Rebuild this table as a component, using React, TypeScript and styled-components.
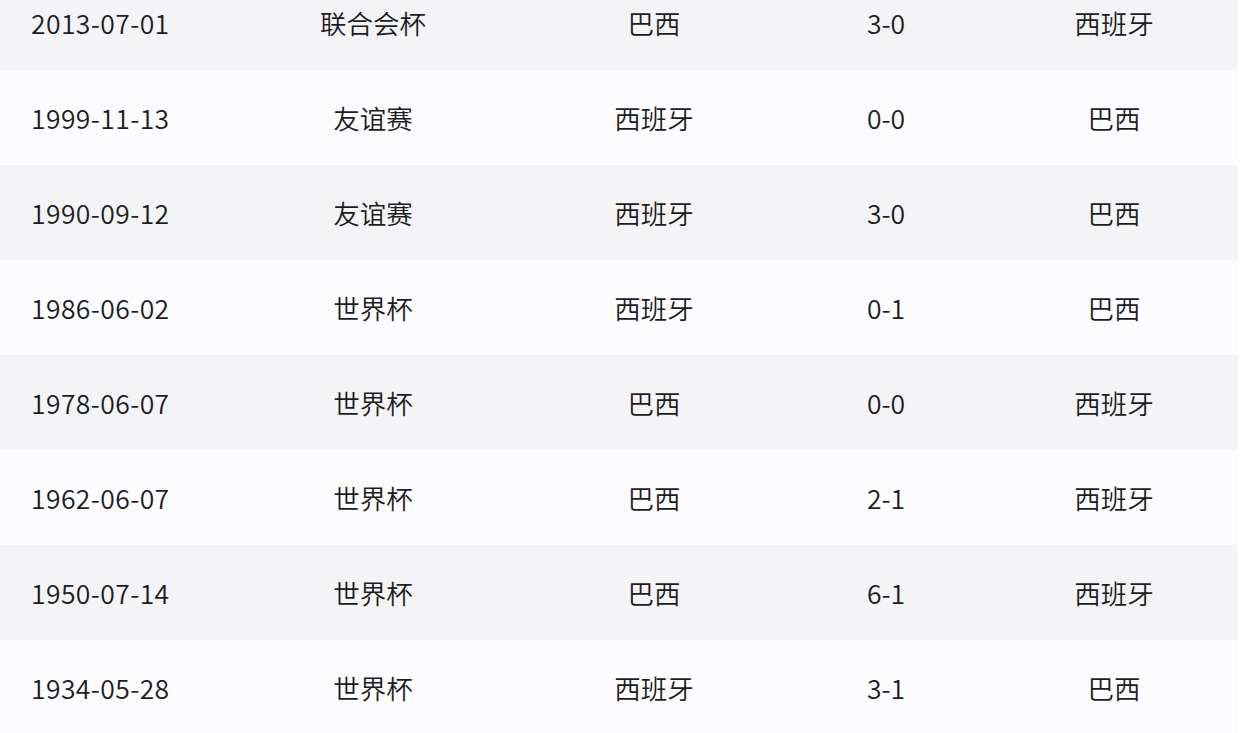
import styled, {createGlobalStyle} from "styled-components";

const GlobalStyle = createGlobalStyle`
  html, body {
    margin: 0;
    padding: 0;
    background: #ffffff;
    overflow: hidden;
  }
  body {
    font-family: "Noto Sans CJK SC", "Noto Sans", sans-serif;
  }
`;

const Wrapper = styled.div`
  width: 1238px;
  height: 733px;
  overflow: hidden;
`;
const Table = styled.div`
  margin-top: -25px;
  display: flex;
  flex-direction: column;
`;
const Row = styled.div<{striped: boolean}>`
  display: grid;
  grid-template-columns: 220px 306px 256px 208px 248px;
  height: 95px;
  align-items: center;
  background: ${props => props.striped ? "#f4f4f6" : "#fcfcfe"};
  color: #1c1c22;
  font-size: 26.5px;
  font-weight: 350;
`;
const Cell = styled.div<{left?: boolean}>`
  text-align: ${props => props.left ? "left" : "center"};
  padding-left: ${props => props.left ? "31px" : "0"};
  white-space: nowrap;
`;
const DateText = styled.span`
  letter-spacing: 0.4px;
`;

const matches = [
    ["2013-07-01", "联合会杯", "巴西", "3-0", "西班牙"],
    ["1999-11-13", "友谊赛", "西班牙", "0-0", "巴西"],
    ["1990-09-12", "友谊赛", "西班牙", "3-0", "巴西"],
    ["1986-06-02", "世界杯", "西班牙", "0-1", "巴西"],
    ["1978-06-07", "世界杯", "巴西", "0-0", "西班牙"],
    ["1962-06-07", "世界杯", "巴西", "2-1", "西班牙"],
    ["1950-07-14", "世界杯", "巴西", "6-1", "西班牙"],
    ["1934-05-28", "世界杯", "西班牙", "3-1", "巴西"],
];

function App() {
    return (
        <Wrapper>
            <GlobalStyle/>
            <Table>
                {matches.map((m, i) => (
                    <Row key={m[0]} striped={i % 2 === 0}>
                        <Cell left><DateText>{m[0]}</DateText></Cell>
                        <Cell>{m[1]}</Cell>
                        <Cell>{m[2]}</Cell>
                        <Cell>{m[3]}</Cell>
                        <Cell>{m[4]}</Cell>
                    </Row>
                ))}
            </Table>
        </Wrapper>
    );
}

export default App;
